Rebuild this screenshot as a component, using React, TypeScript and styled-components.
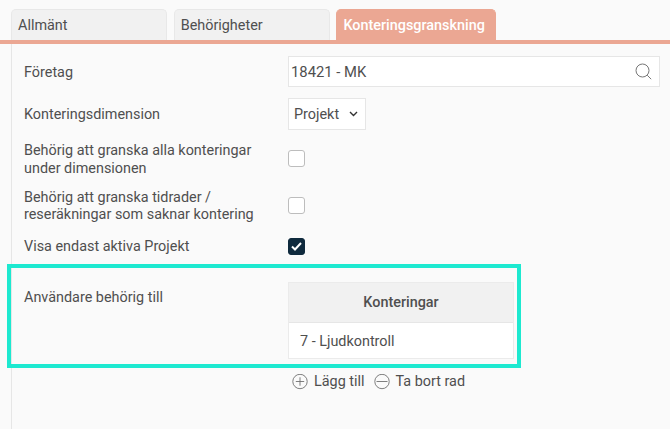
import styled, { createGlobalStyle } from 'styled-components';

const GlobalStyle = createGlobalStyle`
  html, body {
    margin: 0;
    padding: 0;
    background: #fafafa;
  }
  body {
    font-family: Roboto, "Liberation Sans", sans-serif;
    font-size: 14.4px;
    color: #4f4f4f;
    overflow: hidden;
  }
`;

const Page = styled.div`
  width: 670px;
  height: 429px;
  padding-top: 9px;
  box-sizing: border-box;
  overflow: hidden;
`;

const TabBar = styled.div`
  display: flex;
  gap: 6.7px;
  height: 31px;
  padding-left: 11px;
  border-bottom: 4px solid #eba793;
`;

const Tab = styled.div<{ $active?: boolean; $width: number }>`
  width: ${(p) => p.$width}px;
  height: 31px;
  box-sizing: border-box;
  padding: 6.5px 6px 0;
  border-radius: 5px 5px 0 0;
  line-height: 18px;
  font-weight: ${(p) => (p.$active ? 500 : 400)};
  color: ${(p) => (p.$active ? '#ffffff' : '#4f4f4f')};
  background: ${(p) => (p.$active ? '#eba793' : '#f1f1f1')};
  border: 1px solid ${(p) => (p.$active ? '#eba793' : '#e8e8e8')};
  border-bottom: none;
`;

const Panel = styled.div`
  margin-left: 11px;
  height: 400px;
  padding: 12px 0 0 12px;
  border-left: 1px solid #e6e6e6;
`;

const Row = styled.div<{ $height: number; $gap?: number }>`
  display: grid;
  grid-template-columns: 264px 1fr;
  grid-template-rows: ${(p) => p.$height}px;
  align-items: center;
  margin-bottom: ${(p) => p.$gap ?? 0}px;
`;

const Label = styled.div`
  padding-top: 2px;
  line-height: 17.3px;
`;

const SearchBox = styled.div`
  display: flex;
  align-items: center;
  justify-content: space-between;
  width: 372px;
  height: 31px;
  box-sizing: border-box;
  padding: 0 7px 0 2px;
  background: #fff;
  border: 1px solid #e6e6e6;
  font-size: 14.8px;
`;

const SelectBox = styled.div`
  display: flex;
  align-items: center;
  justify-content: space-between;
  width: 78px;
  height: 32px;
  box-sizing: border-box;
  padding: 0 7px 0 5px;
  background: #fff;
  border: 1px solid #e6e6e6;
`;

const Check = styled.div<{ $checked?: boolean }>`
  display: flex;
  align-items: center;
  justify-content: center;
  width: 17px;
  height: 17px;
  box-sizing: border-box;
  border-radius: 3px;
  border: 1px solid ${(p) => (p.$checked ? '#0f2a3d' : '#bdbdbd')};
  background: ${(p) => (p.$checked ? '#0f2a3d' : '#fff')};
`;

const HighlightedRow = styled.div`
  position: relative;
  display: grid;
  grid-template-columns: 264px 1fr;
  padding-top: 18px;
`;

const Highlight = styled.div`
  position: absolute;
  left: -17px;
  right: 149px;
  top: 0;
  height: 104px;
  box-sizing: border-box;
  border: 4px solid #1de9d0;
  pointer-events: none;
`;

const TopLabel = styled(Label)`
  padding-top: 7px;
`;

const Table = styled.div`
  width: 226px;
  box-sizing: border-box;
  border: 1px solid #ebebeb;
`;

const TableHead = styled.div`
  height: 39px;
  line-height: 39px;
  text-align: center;
  font-weight: 500;
  background: #f1f1f1;
  border-bottom: 1px solid #e6e6e6;
`;

const TableCell = styled.div`
  height: 35px;
  line-height: 37px;
  padding-left: 11px;
  background: #fff;
`;

const Actions = styled.div`
  display: flex;
  align-items: center;
  gap: 9px;
  margin-top: 14px;
  padding-left: 4px;
`;

const Action = styled.div`
  display: flex;
  align-items: center;
  gap: 6px;
`;

const Circle = ({ plus }: { plus?: boolean }) => (
  <svg width="16" height="16" viewBox="0 0 16 16" fill="none" stroke="#707070" strokeWidth="0.9">
    <circle cx="8" cy="7.5" r="7.2" />
    <path d={plus ? 'M3.8 7.5h8.4' : 'M2.5 7.5h11'} />
    {plus && <path d="M8 3.3v8.4" />}
  </svg>
);

export default function App() {
  return (
    <Page>
      <GlobalStyle />
      <TabBar>
        <Tab $width={156}>Allmänt</Tab>
        <Tab $width={156}>Behörigheter</Tab>
        <Tab $width={160} $active>Konteringsgranskning</Tab>
      </TabBar>
      <Panel>
        <Row $height={31} $gap={11}>
          <Label>Företag</Label>
          <SearchBox>
            18421 - MK
            <svg width="17" height="17" viewBox="0 0 17 17" fill="none" stroke="#777" strokeWidth="1">
              <circle cx="7.5" cy="7.5" r="6.5" />
              <path d="M12.2 12.2l4 4" />
            </svg>
          </SearchBox>
        </Row>
        <Row $height={32} $gap={11}>
          <Label>Konteringsdimension</Label>
          <SelectBox>
            Projekt
            <svg width="9" height="6" viewBox="0 0 9 6" fill="none" stroke="#333" strokeWidth="1.4">
              <path d="M1 1l3.5 3.5L8 1" />
            </svg>
          </SelectBox>
        </Row>
        <Row $height={35} $gap={11}>
          <Label>
            Behörig att granska alla konteringar
            <br />
            under dimensionen
          </Label>
          <Check />
        </Row>
        <Row $height={36} $gap={14}>
          <Label>
            Behörig att granska tidrader /
            <br />
            reseräkningar som saknar kontering
          </Label>
          <Check />
        </Row>
        <Row $height={18} $gap={9}>
          <Label>Visa endast aktiva Projekt</Label>
          <Check $checked>
            <svg width="11" height="9" viewBox="0 0 11 9" fill="none" stroke="#fff" strokeWidth="2">
              <path d="M1 4.5l3 3L10 1" />
            </svg>
          </Check>
        </Row>
        <HighlightedRow>
          <Highlight />
          <TopLabel>Användare behörig till</TopLabel>
          <div>
            <Table>
              <TableHead>Konteringar</TableHead>
              <TableCell>7 - Ljudkontroll</TableCell>
            </Table>
            <Actions>
              <Action>
                <Circle plus />
                Lägg till
              </Action>
              <Action>
                <Circle />
                Ta bort rad
              </Action>
            </Actions>
          </div>
        </HighlightedRow>
      </Panel>
    </Page>
  );
}
